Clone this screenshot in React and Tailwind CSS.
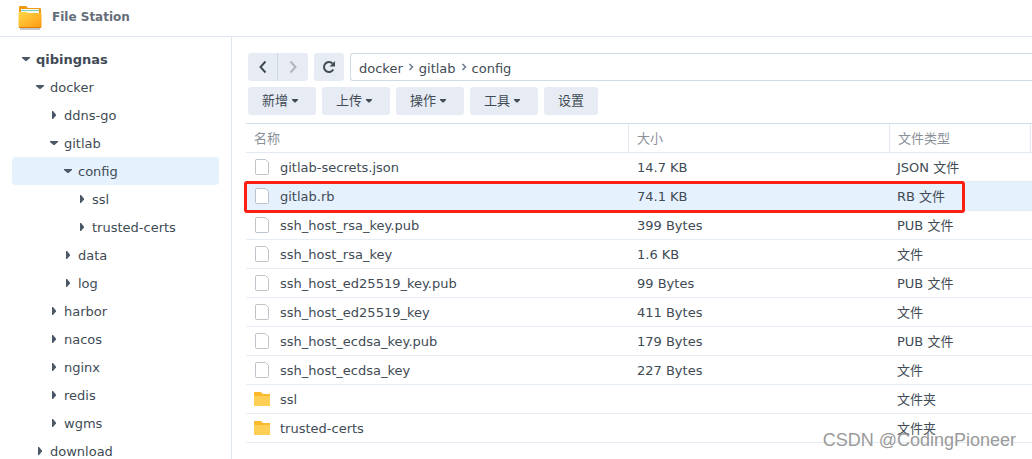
import { useState } from 'react'

const TREE = [
  { name: 'qibingnas', level: 0, open: true },
  { name: 'docker', level: 1, open: true },
  { name: 'ddns-go', level: 2 },
  { name: 'gitlab', level: 2, open: true },
  { name: 'config', level: 3, open: true },
  { name: 'ssl', level: 4 },
  { name: 'trusted-certs', level: 4 },
  { name: 'data', level: 3 },
  { name: 'log', level: 3 },
  { name: 'harbor', level: 2 },
  { name: 'nacos', level: 2 },
  { name: 'nginx', level: 2 },
  { name: 'redis', level: 2 },
  { name: 'wgms', level: 2 },
  { name: 'download', level: 1 },
]

const INDENT = ['pl-2.5', 'pl-6', 'pl-[38px]', 'pl-[52px]', 'pl-[66px]']

const FILES = [
  { name: 'gitlab-secrets.json', size: '14.7 KB', type: 'JSON 文件' },
  { name: 'gitlab.rb', size: '74.1 KB', type: 'RB 文件' },
  { name: 'ssh_host_rsa_key.pub', size: '399 Bytes', type: 'PUB 文件' },
  { name: 'ssh_host_rsa_key', size: '1.6 KB', type: '文件' },
  { name: 'ssh_host_ed25519_key.pub', size: '99 Bytes', type: 'PUB 文件' },
  { name: 'ssh_host_ed25519_key', size: '411 Bytes', type: '文件' },
  { name: 'ssh_host_ecdsa_key.pub', size: '179 Bytes', type: 'PUB 文件' },
  { name: 'ssh_host_ecdsa_key', size: '227 Bytes', type: '文件' },
  { name: 'ssl', size: '', type: '文件夹', folder: true },
  { name: 'trusted-certs', size: '', type: '文件夹', folder: true },
]

const ACTIONS = ['新增', '上传', '操作', '工具']
const PATH = ['docker', 'gitlab', 'config']

function AppIcon() {
  return (
    <svg width="24" height="25" viewBox="0 0 24 25">
      <defs>
        <linearGradient id="folder" x1="0" y1="0" x2="1" y2="1">
          <stop offset="0" stopColor="#ffd84a" />
          <stop offset="1" stopColor="#fd9a10" />
        </linearGradient>
      </defs>
      <path d="M1 22V2a1 1 0 0 1 1-1h6l2 2h12a1 1 0 0 1 1 1v18z" fill="#f09a10" />
      <path d="M3 4h18v6H3z" fill="#f4faf6" />
      <path d="M3 5.500h18" stroke="#79cdb0" />
      <path d="M0.500 8a1 1 0 0 1 1-1h6.500l2.500 1h12a1 1 0 0 1 1 1v12.500a1 1 0 0 1-1 1h-21a1 1 0 0 1-1-1z" fill="url(#folder)" />
      <path d="M1 22.500h22" stroke="#e07c08" />
      <path d="M2 24h20" stroke="#8b8f98" />
    </svg>
  )
}

function FileIcon() {
  return (
    <svg width="14" height="16" viewBox="0 0 14 16" className="mx-px">
      <path d="M1.500 0.500h9l3 3v11a1 1 0 0 1-1 1h-11a1 1 0 0 1-1-1v-13a1 1 0 0 1 1-1z" fill="#fff" stroke="#bfc3c9" />
    </svg>
  )
}

function FolderIcon() {
  return (
    <svg width="16" height="14" viewBox="0 0 16 14">
      <path d="M0 0h7l2 2h7v4H0z" fill="#fdb92c" />
      <path d="M0 4h16v10H0z" fill="#ffcf55" />
    </svg>
  )
}

function Caret({ open }) {
  return (
    <svg width="8" height="8" viewBox="0 0 8 8" fill="#4b5866" className="shrink-0">
      {open ? <path d="M0 2h8v1L4.500 6h-1L0 3z" /> : <path d="M2 0h1l3 3.500v1L3 8H2z" />}
    </svg>
  )
}

function Down() {
  return (
    <svg width="6" height="4" viewBox="0 0 6 4" fill="#414b55">
      <path d="M0 0h6v1L3.500 3.500h-1L0 1z" />
    </svg>
  )
}

function Chevron({ d, color }) {
  return (
    <svg width="10" height="14" viewBox="0 0 10 14" fill="none" stroke={color} strokeWidth="2">
      <path d={d} />
    </svg>
  )
}

function Toolbar() {
  return (
    <div className="pl-4">
      <div className="flex">
        <div className="flex h-7 overflow-hidden rounded-[3px] bg-[#e7ecf4]">
          <button aria-label="Back" className="flex w-[29px] items-center justify-center">
            <Chevron d="M7.500 1.500L2.500 7l5 5.500" color="#414b55" />
          </button>
          <button aria-label="Forward" className="flex w-[31px] items-center justify-center border-l border-[#cfd8e2]">
            <Chevron d="M2.500 1.500l5 5.500-5 5.500" color="#b0b5bd" />
          </button>
        </div>
        <button aria-label="Refresh" className="ml-1.5 flex h-7 w-[30px] items-center justify-center rounded-[3px] bg-[#e7ecf4]">
          <svg width="14" height="14" viewBox="0 0 14 14" fill="none">
            <path d="M11.300 9.500A5 5 0 1 1 10.500 3.500" stroke="#414b55" strokeWidth="2" />
            <path d="M13 1v5.500H7.500z" fill="#414b55" />
          </svg>
        </button>
        <nav className="ml-1.5 flex h-7 flex-1 items-center rounded-l-[3px] border border-r-0 border-[#cfdbe6] pt-1 pl-2">
          {PATH.map((p, i) => (
            <span key={p} className="flex items-center">
              {i > 0 && (
                <svg width="16" height="8" viewBox="0 0 16 8" fill="none" stroke="#6a7a8c" strokeWidth="1.500" className="mb-1">
                  <path d="M6.500 1l3 3-3 3" />
                </svg>
              )}
              <a href={`#${p}`}>{p}</a>
            </span>
          ))}
        </nav>
      </div>
      <div className="mt-1.5 flex gap-1.5">
        {ACTIONS.map(a => (
          <button key={a} className="flex h-7 w-[68px] items-center justify-center gap-1 rounded-[3px] bg-[#e7ecf4] pr-1">
            <span>{a}</span>
            <Down />
          </button>
        ))}
        <button className="h-7 w-[54px] rounded-[3px] bg-[#e7ecf4]">设置</button>
      </div>
    </div>
  )
}

function FileTable() {
  const [selected, setSelected] = useState('gitlab.rb')

  return (
    <div className="relative mt-2 ml-3.5">
      <table className="w-full table-fixed border-separate border-spacing-0 border-t border-[#d3dfe9] text-left">
        <thead>
          <tr className="h-[29px] text-[#8b9199]">
            <th className="border-r border-b border-[#e3eaf2] pt-0.5 pl-2 font-normal">名称</th>
            <th className="w-[261px] border-r border-b border-[#e3eaf2] pt-0.5 pl-2 font-normal">大小</th>
            <th className="w-[141px] border-r border-b border-[#e3eaf2] pt-0.5 pl-2 font-normal">文件类型</th>
            <td className="w-px border-b border-[#e3eaf2]" />
          </tr>
        </thead>
        <tbody>
          {FILES.map(f => (
            <tr
              key={f.name}
              onClick={() => setSelected(f.name)}
              className={`h-[29px] ${f.name === selected ? 'bg-[#e5f1fd]' : ''}`}
            >
              <td className="border-b border-[#e6ecf3] pl-2">
                <div className="flex items-center gap-2.5">
                  {f.folder ? <FolderIcon /> : <FileIcon />}
                  <span className="pt-0.5">{f.name}</span>
                </div>
              </td>
              <td className="border-b border-[#e6ecf3] pt-0.5 pl-2">{f.size}</td>
              <td className="border-b border-[#e6ecf3] pt-0.5 pl-[7px]">{f.type}</td>
              <td className="border-b border-[#e6ecf3]" />
            </tr>
          ))}
        </tbody>
      </table>
      {/* highlight frame around the file to edit */}
      <div className="pointer-events-none absolute top-[58px] right-[67px] -left-0.5 h-8 rounded-[3px] border-3 border-[#fd1f12]" />
    </div>
  )
}

export default function App() {
  return (
    <div className="relative flex h-screen flex-col overflow-hidden bg-white font-['DejaVu_Sans','Noto_Sans_CJK_SC',sans-serif] text-[13px] leading-5 text-[#414b55]">
      <header className="flex h-[37px] shrink-0 items-center gap-2.5 border-b border-[#dde6ef] pb-0.5 pl-[18px]">
        <AppIcon />
        <h1 className="text-xs font-bold text-[#646d78]">File Station</h1>
      </header>

      <div className="flex min-h-0 flex-1">
        <aside className="w-[232px] shrink-0 overflow-hidden border-r border-[#e0e6ed] py-2 pr-3 pl-3">
          {TREE.map((t, i) => (
            <button
              key={i}
              className={`flex h-7 w-full items-center gap-1.5 rounded-[4px] ${INDENT[t.level]}
                ${t.level === 0 ? 'font-bold' : ''} ${t.name === 'config' ? 'bg-[#e5f1fd]' : ''}`}
            >
              <Caret open={t.open} />
              <span className="pt-0.5">{t.name}</span>
            </button>
          ))}
        </aside>

        <main className="min-w-0 flex-1 pt-4">
          <Toolbar />
          <FileTable />
        </main>
      </div>

      <div className="pointer-events-none absolute right-4 bottom-[7px] font-['Liberation_Sans',sans-serif] text-lg leading-6 text-[#9a9a9a]">
        CSDN @CodingPioneer
      </div>
    </div>
  )
}
